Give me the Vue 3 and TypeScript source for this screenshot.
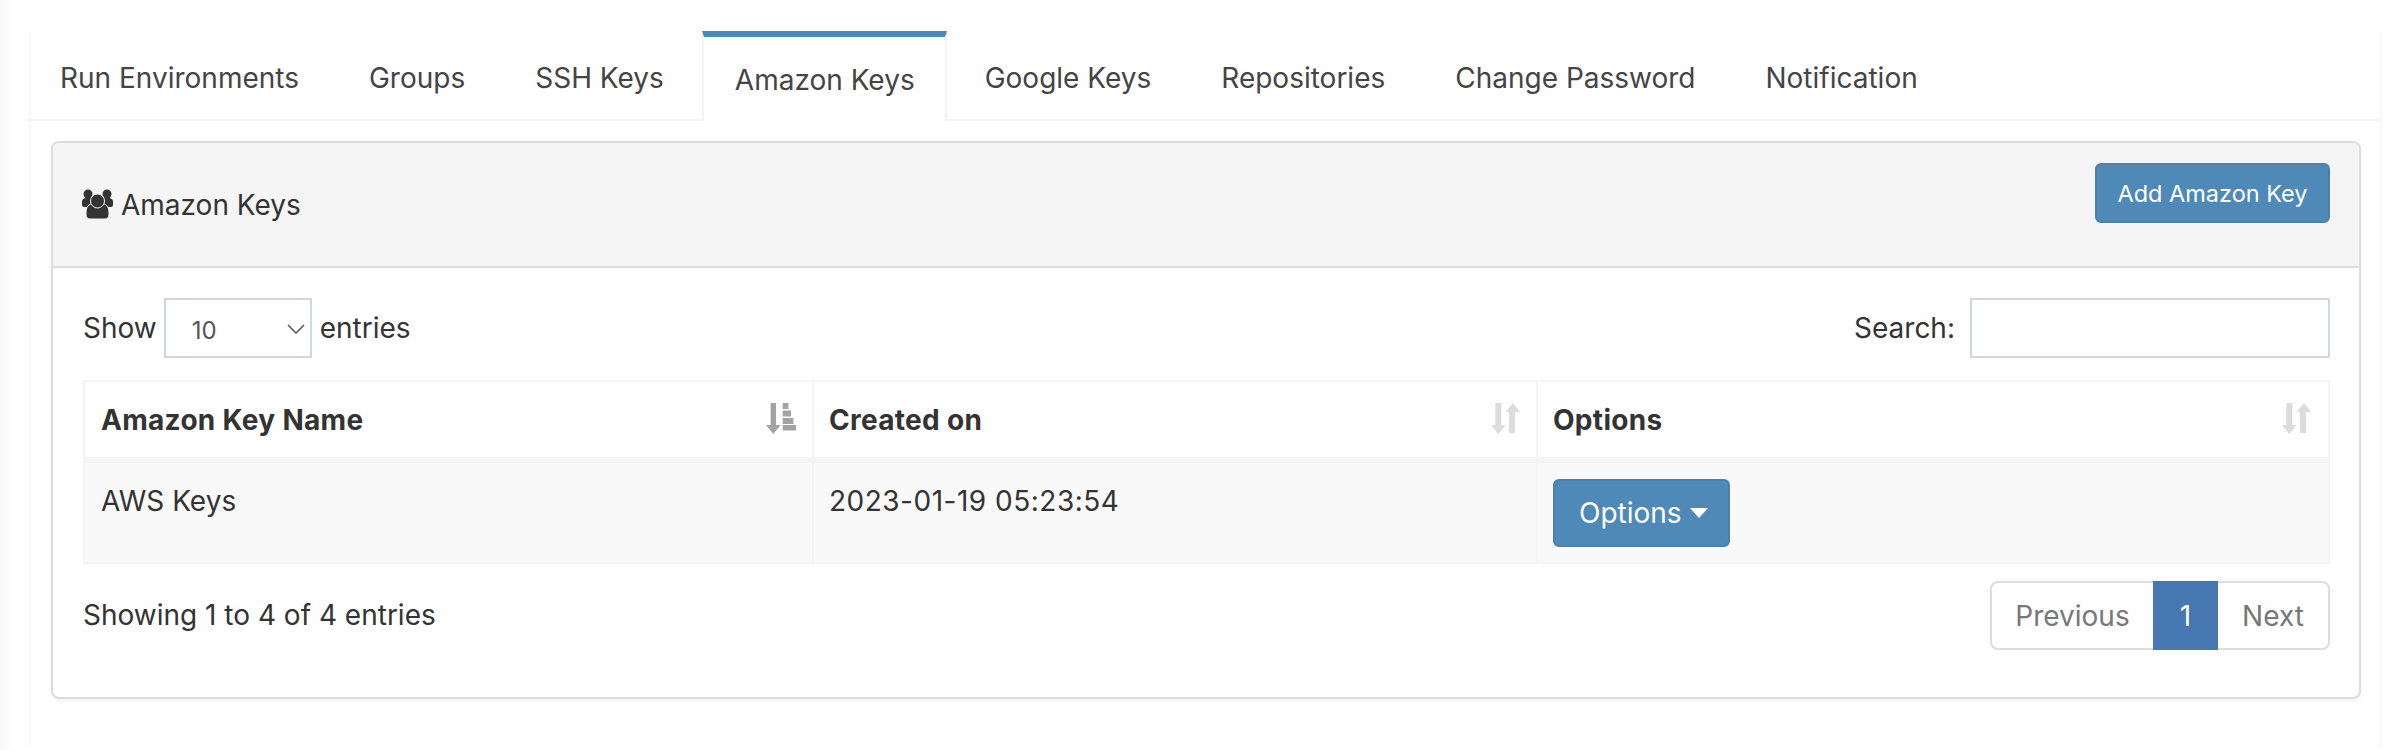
<script setup lang="ts">
const tabs = [
  'Run Environments',
  'Groups',
  'SSH Keys',
  'Amazon Keys',
  'Google Keys',
  'Repositories',
  'Change Password',
  'Notification'
]
const activeTab = 'Amazon Keys'
</script>

<template>
  <div class="page">
    <div class="tab-wrap">
      <ul class="tabs">
        <li v-for="tab in tabs" :key="tab" class="tab" :class="{ active: tab === activeTab }">{{ tab }}</li>
      </ul>

      <section class="panel">
        <header class="panel-head">
          <h3 class="panel-title">
            <svg class="users-icon" width="31" height="30" viewBox="0 0 31 30">
              <circle cx="6" cy="5" r="4.500" fill="#333" />
              <circle cx="25" cy="5" r="4.500" fill="#333" />
              <path d="M0 13c0-3 2-4 5-4h21c3 0 5 1 5 4v3c0 1-1 2-2 2H2c-1 0-2-1-2-2z" fill="#333" />
              <path d="M4 24c0-6 3-9.500 7-9.500h9c4 0 7 3.500 7 9.500v2c0 2.500-2 4-4 4H8c-2 0-4-1.500-4-4z" fill="#333" stroke="#f5f5f5" stroke-width="1" />
              <circle cx="15.500" cy="12" r="7" fill="#333" stroke="#f5f5f5" stroke-width="1" />
            </svg>
            Amazon Keys
          </h3>
          <button class="btn-add" type="button">Add Amazon Key</button>
        </header>

        <div class="panel-body">
          <div class="controls">
            <label class="length">
              Show
              <span class="select-wrap">
                <select class="length-select">
                  <option>10</option>
                  <option>25</option>
                  <option>50</option>
                  <option>100</option>
                </select>
                <svg class="chevron" width="18" height="10" viewBox="0 0 18 10">
                  <path d="M1 1l8 8 8-8" fill="none" stroke="#555" stroke-width="1.500" />
                </svg>
              </span>
              entries
            </label>
            <label class="search">
              Search:
              <input class="search-input" type="search" />
            </label>
          </div>

          <table class="keys-table">
            <thead>
              <tr>
                <th class="col-name">
                  Amazon Key Name
                  <svg class="sort-icon" width="30" height="31" viewBox="0 0 30 31" fill="#a3a3a3">
                    <path d="M4.600 0H10v22h4.600L7.300 31 0 22h4.600z" />
                    <rect x="16.700" y="0" width="5.700" height="6" />
                    <rect x="16.700" y="7.500" width="8.300" height="6" />
                    <rect x="16.700" y="15" width="10.700" height="6" />
                    <rect x="16.700" y="22" width="13.300" height="5.500" />
                  </svg>
                </th>
                <th class="col-date">
                  Created on
                  <svg class="sort-icon" width="29" height="31" viewBox="0 0 29 31" fill="#dcdcdc">
                    <path d="M4.300 0h6v22h4.400L7.300 31 0 22h4.300z" />
                    <path d="M18 30V9h-3.300L22 0l7.300 9H24v21z" />
                  </svg>
                </th>
                <th class="col-options">
                  Options
                  <svg class="sort-icon sort-last" width="29" height="31" viewBox="0 0 29 31" fill="#dcdcdc">
                    <path d="M4.300 0h6v22h4.400L7.300 31 0 22h4.300z" />
                    <path d="M18 30V9h-3.300L22 0l7.300 9H24v21z" />
                  </svg>
                </th>
              </tr>
            </thead>
            <tbody>
              <tr>
                <td>AWS Keys</td>
                <td class="date-cell">2023-01-19 05:23:54</td>
                <td>
                  <button class="btn-options" type="button">
                    Options
                    <span class="caret"></span>
                  </button>
                </td>
              </tr>
            </tbody>
          </table>

          <div class="table-foot">
            <div class="info">Showing 1 to 4 of 4 entries</div>
            <ul class="pagination">
              <li class="page-item prev">Previous</li>
              <li class="page-item current">1</li>
              <li class="page-item next">Next</li>
            </ul>
          </div>
        </div>
      </section>
    </div>
  </div>
</template>

<style>
html,
body {
  margin: 0;
  background: #fff;
}
</style>

<style scoped>
.page {
  box-sizing: border-box;
  min-height: 750px;
  padding: 35px 18px 0 29px;
  background: linear-gradient(to right, #f9f9f9, #fff 14px);
  font-family: Inter, "Liberation Sans", sans-serif;
  font-size: 28px;
  line-height: 40px;
  color: #333;
}

.tab-wrap {
  box-sizing: border-box;
  min-height: 715px;
  border-left: 2px solid #f8f8f8;
  border-right: 2px solid #f8f8f8;
}

.tabs {
  display: flex;
  box-sizing: border-box;
  height: 90px;
  margin: -4px 0 0 -3px;
  padding: 0;
  list-style: none;
  border-bottom: 2px solid #f4f4f4;
}

.tab {
  box-sizing: border-box;
  height: 88px;
  margin-right: 6px;
  padding: 27px 32px 0;
  color: #444;
  white-space: nowrap;
}

.tab.active {
  height: 90px;
  padding: 23px 30px 0 31px;
  border-top: 6px solid #4f89b8;
  border-left: 2px solid #f4f4f4;
  border-right: 2px solid #f4f4f4;
  background: #fff;
}

.panel {
  margin: 20px 19px 0 20px;
  border: 2px solid #ddd;
  border-radius: 8px;
  box-shadow: 0 2px 4px rgba(0, 0, 0, 0.05);
  background: #fff;
}

.panel-head {
  display: flex;
  justify-content: space-between;
  align-items: flex-start;
  padding: 20px 29px 41px;
  border-bottom: 2px solid #ddd;
  border-radius: 6px 6px 0 0;
  background: #f5f5f5;
}

.panel-title {
  display: flex;
  align-items: center;
  gap: 8px;
  margin: 22px 0 0;
  font-size: 28px;
  font-weight: 400;
  line-height: 40px;
}

.users-icon {
  margin-top: -2px;
}

.btn-add {
  box-sizing: border-box;
  width: 235px;
  height: 60px;
  padding: 0;
  border: 2px solid #4b80ab;
  border-radius: 6px;
  background: #4f89b8;
  color: #fff;
  font-family: inherit;
  font-size: 23.500px;
}

.panel-body {
  padding: 30px 29px 47px 30px;
}

.controls {
  display: flex;
  justify-content: space-between;
  align-items: center;
  height: 60px;
}

.length,
.search {
  display: flex;
  align-items: center;
}

.select-wrap {
  position: relative;
  display: block;
  margin: 0 8px 0 7px;
}

.length-select {
  display: block;
  box-sizing: border-box;
  width: 148px;
  height: 60px;
  padding: 4px 0 0 26px;
  border: 2px solid #d2d6de;
  border-radius: 0;
  appearance: none;
  background: #fff;
  color: #555;
  font-family: inherit;
  font-size: 24px;
}

.chevron {
  position: absolute;
  top: 26px;
  right: 7px;
}

.search-input {
  box-sizing: border-box;
  width: 360px;
  height: 60px;
  margin-left: 15px;
  border: 2px solid #d2d6de;
  border-radius: 0;
  background: #fff;
}

.keys-table {
  box-sizing: border-box;
  width: 2247px;
  margin-top: 22px;
  border-collapse: separate;
  border-spacing: 0;
  table-layout: fixed;
  border-top: 2px solid #f4f4f4;
  border-bottom: 2px solid #f4f4f4;
}

.col-name {
  width: 729px;
}

.col-date {
  width: 724px;
}

.keys-table th,
.keys-table td {
  box-sizing: border-box;
  border-left: 2px solid #f4f4f4;
  text-align: left;
  vertical-align: top;
}

.keys-table th:last-child,
.keys-table td:last-child {
  border-right: 2px solid #f4f4f4;
}

.keys-table th {
  position: relative;
  height: 81px;
  padding: 18px 16px 0 15px;
  border-bottom: 6px solid #f4f4f4;
  font-weight: 700;
  letter-spacing: 0.3px;
}

.keys-table th:first-child,
.keys-table td:first-child {
  padding-left: 16px;
}

.keys-table td {
  height: 99px;
  padding: 16px 15px 0;
  background: #f9f9f9;
}

.keys-table td:not(:last-child) {
  padding-top: 18px;
}

.date-cell {
  letter-spacing: 0.5px;
}

.sort-icon {
  position: absolute;
  top: 21px;
  right: 16px;
}

.sort-last {
  right: 17px;
}

.btn-options {
  display: flex;
  align-items: center;
  gap: 8px;
  box-sizing: border-box;
  width: 177px;
  height: 68px;
  padding: 0 0 0 24px;
  border: 2px solid #4b80ab;
  border-radius: 6px;
  background: #4f89b8;
  color: #fff;
  font-family: inherit;
  font-size: 28px;
}

.caret {
  width: 0;
  height: 0;
  border-top: 10px solid #fff;
  border-left: 9px solid transparent;
  border-right: 9px solid transparent;
}

.table-foot {
  display: flex;
  justify-content: space-between;
  margin-top: 17px;
}

.info {
  padding-top: 14px;
}

.pagination {
  display: flex;
  box-sizing: border-box;
  height: 69px;
  margin: 0;
  padding: 0;
  list-style: none;
  color: #777;
}

.page-item {
  box-sizing: border-box;
  padding-top: 13px;
  border-top: 2px solid #ddd;
  border-bottom: 2px solid #ddd;
  text-align: center;
}

.prev {
  width: 163px;
  border-left: 2px solid #ddd;
  border-radius: 8px 0 0 8px;
}

.current {
  width: 65px;
  border-color: #4677b1;
  background: #4677b1;
  color: #fff;
}

.next {
  width: 112px;
  border-right: 2px solid #ddd;
  border-radius: 0 8px 8px 0;
}
</style>
